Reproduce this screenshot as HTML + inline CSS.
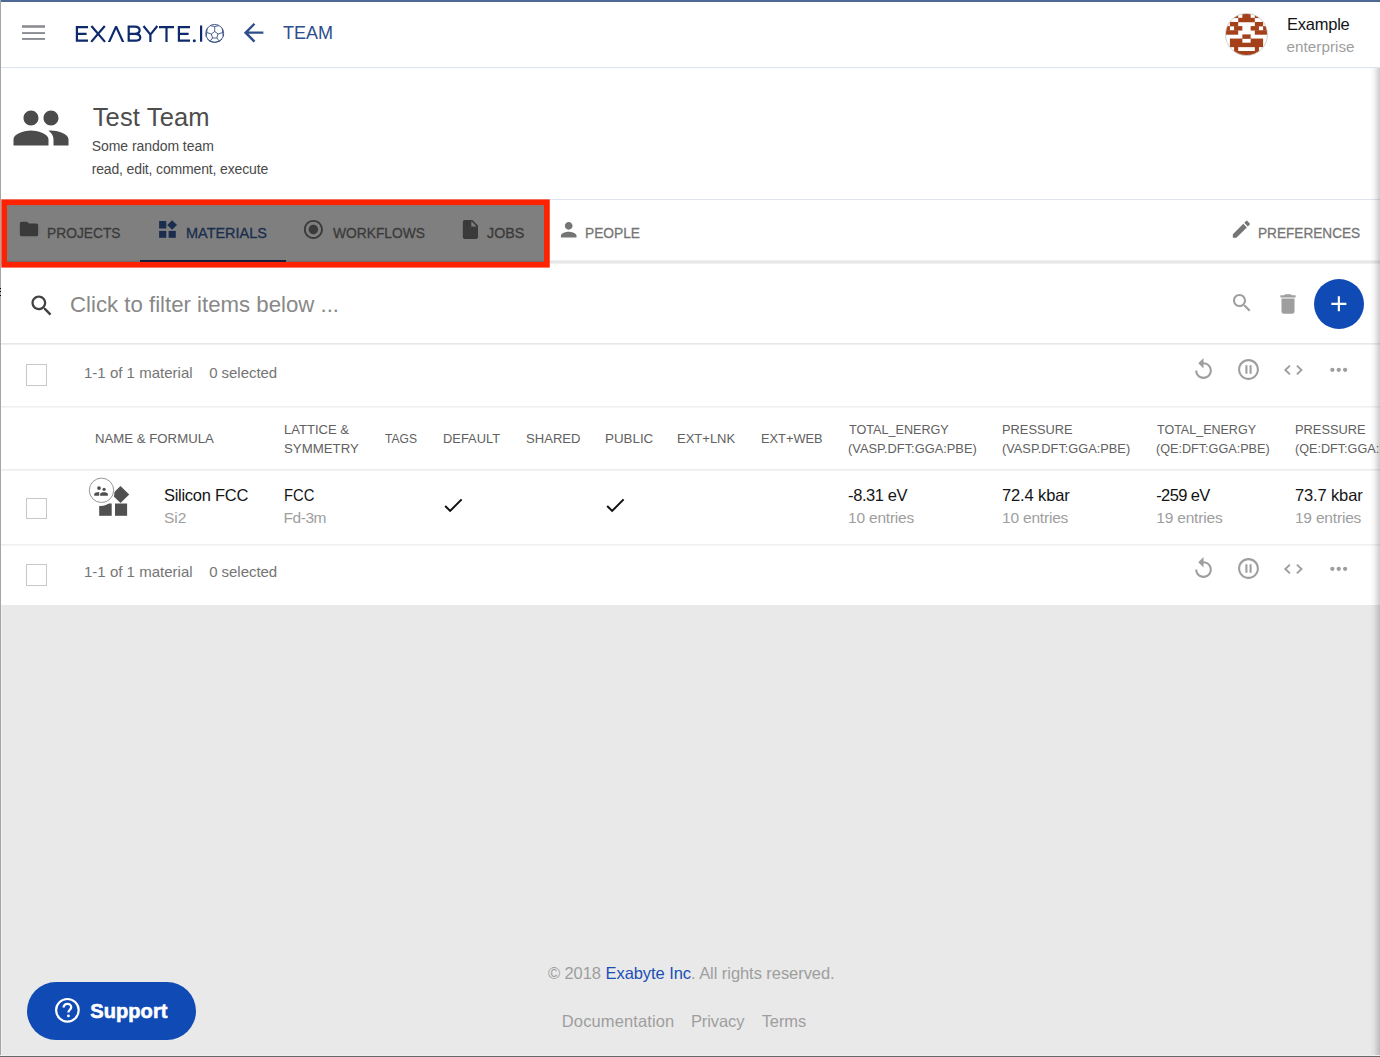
<!DOCTYPE html>
<html><head><meta charset="utf-8"><title>Team</title>
<style>
html,body{margin:0;padding:0}
body{width:1380px;height:1057px;overflow:hidden;position:relative;background:#e9e9e9;font-family:"Liberation Sans",sans-serif}
.abs{position:absolute;box-sizing:content-box}
.t{position:absolute;white-space:nowrap;line-height:1;font-family:"Liberation Sans",sans-serif;transform-origin:0 0}
.i{position:absolute;overflow:visible}
</style></head><body>
<div class="abs" style="left:0;top:0;width:1380px;height:605px;background:#fff"></div>
<div class="abs" style="left:0;top:0;width:1380px;height:2px;background:#4e6996"></div>
<div class="abs" style="left:0;top:67px;width:1380px;height:1px;background:#dde3ec"></div>
<div class="abs" style="left:0;top:199px;width:1380px;height:1px;background:#dfe3ec"></div>
<svg class="i" style="left:0;top:255px" width="1380" height="12" viewBox="0 255 1380 12"><rect x="0" y="260.3" width="1380" height="3.3" fill="#e8e8e8"/></svg>
<svg class="i" style="left:0;top:330px" width="1380" height="230" viewBox="0 330 1380 230"><rect x="0" y="343.1" width="1380" height="1.5" fill="#e6e6e6"/><rect x="0" y="406.1" width="1380" height="1.5" fill="#efefef"/><rect x="0" y="469.1" width="1380" height="1.5" fill="#ebebeb"/><rect x="0" y="544.1" width="1380" height="1.5" fill="#efefef"/></svg>
<svg class="i" style="left:0;top:0" width="60" height="60"><rect x="22" y="25.2" width="23" height="2.6" fill="#8a8d91"/><rect x="22" y="32.1" width="23" height="1.9" fill="#8a8d91"/><rect x="22" y="38" width="23" height="1.9" fill="#8a8d91"/></svg>
<svg class="i" style="left:0;top:0" width="240" height="60">
<g fill="none" stroke="#0e2a6c" stroke-width="2.2" stroke-linecap="butt" stroke-linejoin="miter">
<path d="M88 27.1H76.9V40.7H88M76.9 33.9H86.6"/>
<path d="M91.4 26L105 41.9M104.8 26L91.2 41.9"/>

<path d="M128.7 41.7V26.6H134.8C138.3 26.6 139.6 28.2 139.6 30.3C139.6 32.2 138.2 33.8 134.8 33.8H128.7M134.8 33.8C138.6 33.8 140.3 35.5 140.3 37.5C140.3 39.6 138.6 40.6 135.2 40.6H128.7"/>
<path d="M143.5 26L150.4 34.6L157.3 26M150.4 34.6V41.9"/>
<path d="M159 27.1H174M166.5 27.1V41.9"/>
<path d="M190 27.1H178.9V40.7H190M178.9 33.9H188.6"/>
<path d="M201.1 25.5V41.7"/>
</g>
<circle cx="194.3" cy="40.8" r="1.5" fill="#0e2a6c"/><path d="M107.9 41.9L115.2 26H117L124.3 41.9H121.9L116.1 29.2L110.3 41.9Z" fill="#0e2a6c"/>
<g fill="none" stroke="#2a4480" stroke-width="0.85">
<circle cx="214.7" cy="33.4" r="9.0"/>
<path d="M214.7 31.5L218.1 34L216.8 38L212.6 38L211.3 34Z"/>
<path d="M214.7 31.5V26.5M218.1 34L222.6 32.5M216.8 38L219.4 41.3M212.6 38L210 41.3M211.3 34L206.8 32.5"/>
<path d="M214.7 26.5L210.6 25.7M214.7 26.5L218.8 25.7M222.6 32.5L222.3 28.5M222.6 32.5L223.3 36.5M219.4 41.3L222 39M219.4 41.3L214.7 42.3L210 41.3L207.4 39M206.8 32.5L207.1 28.5M206.8 32.5L206.1 36.5"/>
</g>
</svg>
<svg class="i" style="left:238.9px;top:18.1px" width="29.25" height="29.25" viewBox="0 0 24 24"><path fill="#2c4f8c" d="M20 11H7.83l5.59-5.59L12 4l-8 8 8 8 1.41-1.41L7.83 13H20v-2z"/></svg>
<div class="t" style="left:282.5px;top:24.0px;font-size:18.6px;font-weight:400;color:#2c4f8c;transform:scaleX(0.97);">TEAM</div>
<svg class="i" style="left:1225px;top:12.8px" width="43" height="43" viewBox="0 0 43 43"><defs><clipPath id="av"><circle cx="21.5" cy="21.5" r="21"/></clipPath></defs><g clip-path="url(#av)"><rect width="43" height="43" fill="#fff"/><g fill="#a4411a" transform="translate(0.75,0.8)"><rect x="8.30" y="-0.15" width="4.15" height="4.45"/><rect x="16.60" y="-0.15" width="8.30" height="4.45"/><rect x="29.05" y="-0.15" width="4.15" height="4.45"/><rect x="12.45" y="4.00" width="16.60" height="4.45"/><rect x="4.15" y="8.15" width="8.30" height="4.45"/><rect x="29.05" y="8.15" width="8.30" height="4.45"/><rect x="0.00" y="12.30" width="4.15" height="4.45"/><rect x="8.30" y="12.30" width="8.30" height="4.45"/><rect x="24.90" y="12.30" width="8.30" height="4.45"/><rect x="37.35" y="12.30" width="4.15" height="4.45"/><rect x="0.00" y="16.45" width="12.45" height="4.45"/><rect x="29.05" y="16.45" width="12.45" height="4.45"/><rect x="16.60" y="20.60" width="8.30" height="4.45"/><rect x="4.15" y="24.75" width="12.45" height="4.45"/><rect x="24.90" y="24.75" width="12.45" height="4.45"/><rect x="4.15" y="28.90" width="33.20" height="4.45"/><rect x="8.30" y="33.05" width="4.15" height="4.45"/><rect x="29.05" y="33.05" width="4.15" height="4.45"/><rect x="8.30" y="37.20" width="24.90" height="4.45"/></g></g><circle cx="21.5" cy="21.5" r="21" fill="none" stroke="#c9c9c9" stroke-width="0.9"/></svg>
<div class="t" style="left:1287.1px;top:16.03px;font-size:16.5px;font-weight:400;color:#141414;letter-spacing:-0.25px;">Example</div>
<div class="t" style="left:1286.6px;top:38.83px;font-size:15.2px;font-weight:400;color:#9e9e9e;letter-spacing:0.044px;">enterprise</div>
<svg class="i" style="left:11px;top:98.2px" width="60" height="60" viewBox="0 0 24 24"><path fill="#4b4b4b" d="M16 11c1.66 0 2.99-1.34 2.99-3S17.66 5 16 5c-1.66 0-3 1.34-3 3s1.34 3 3 3zm-8 0c1.66 0 2.99-1.34 2.99-3S9.66 5 8 5C6.34 5 5 6.34 5 8s1.34 3 3 3zm0 2c-2.33 0-7 1.170-7 3.5V19h14v-2.5c0-2.33-4.67-3.5-7-3.5zm8 0c-.29 0-.62.02-.97.05 1.16.84 1.97 1.97 1.97 3.45V19h6v-2.5c0-2.33-4.67-3.5-7-3.5z"/></svg>
<div class="t" style="left:92.7px;top:104.81px;font-size:25.5px;font-weight:400;color:#4d4d4d;letter-spacing:0.138px;">Test Team</div>
<div class="t" style="left:91.7px;top:138.95px;font-size:14px;font-weight:400;color:#4a4a4a;letter-spacing:-0.053px;">Some random team</div>
<div class="t" style="left:91.7px;top:161.85px;font-size:14px;font-weight:400;color:#4a4a4a;letter-spacing:-0.148px;">read, edit, comment, execute</div>
<svg class="i" style="left:18.2px;top:218.2px" width="22" height="22" viewBox="0 0 24 24"><path fill="#757575" d="M10 4H4c-1.1 0-1.99.9-1.99 2L2 18c0 1.1.9 2 2 2h16c1.1 0 2-.9 2-2V8c0-1.1-.9-2-2-2h-8l-2-2z"/></svg>
<div class="t" style="left:47.3px;top:226.27px;font-size:14.8px;font-weight:400;color:#757575;transform:scaleX(0.9321);-webkit-text-stroke:0.3px #757575;">PROJECTS</div>
<svg class="i" style="left:0;top:0" width="200" height="260" fill="#365a9c"><rect x="159.1" y="221" width="7.2" height="7.5"/><rect x="159.1" y="230.9" width="7.2" height="6.9"/><rect x="168.6" y="230.9" width="7.2" height="6.9"/><path d="M172.1 220.2L177 225L172.1 229.8L167.2 225Z"/></svg>
<div class="t" style="left:185.8px;top:226.27px;font-size:14.8px;font-weight:400;color:#365a9c;transform:scaleX(0.978);-webkit-text-stroke:0.3px #365a9c;">MATERIALS</div>
<div class="abs" style="left:140px;top:260px;width:146px;height:2.4px;background:#1e4080"></div>
<svg class="i" style="left:302.4px;top:217.9px" width="22.8" height="22.8" viewBox="0 0 24 24"><path fill="#757575" d="M12 7c-2.76 0-5 2.24-5 5s2.24 5 5 5 5-2.24 5-5-2.24-5-5-5zm0-5C6.48 2 2 6.48 2 12s4.48 10 10 10 10-4.48 10-10S17.52 2 12 2zm0 18c-4.42 0-8-3.58-8-8s3.58-8 8-8 8 3.58 8 8-3.58 8-8 8z"/></svg>
<div class="t" style="left:332.9px;top:226.27px;font-size:14.8px;font-weight:400;color:#757575;transform:scaleX(0.9327);-webkit-text-stroke:0.3px #757575;">WORKFLOWS</div>
<svg class="i" style="left:458.9px;top:217.9px" width="22.8" height="22.8" viewBox="0 0 24 24"><path fill="#757575" d="M6 2c-1.1 0-1.99.9-1.99 2L4 20c0 1.1.89 2 1.99 2H18c1.1 0 2-.9 2-2V8l-6-6H6zm7 7V3.5L18.5 9H13z"/></svg>
<div class="t" style="left:486.8px;top:226.27px;font-size:14.8px;font-weight:400;color:#757575;transform:scaleX(0.9658);-webkit-text-stroke:0.3px #757575;">JOBS</div>
<svg class="i" style="left:557.4px;top:218.1px" width="23.4" height="23.4" viewBox="0 0 24 24"><path fill="#757575" d="M12 12c2.21 0 4-1.79 4-4s-1.79-4-4-4-4 1.79-4 4 1.79 4 4 4zm0 2c-2.67 0-8 1.34-8 4v2h16v-2c0-2.66-5.33-4-8-4z"/></svg>
<div class="t" style="left:585.1px;top:226.27px;font-size:14.8px;font-weight:400;color:#757575;transform:scaleX(0.9293);-webkit-text-stroke:0.3px #757575;">PEOPLE</div>
<svg class="i" style="left:1230px;top:218.2px" width="22.7" height="22.7" viewBox="0 0 24 24"><path fill="#757575" d="M3 17.25V21h3.75L17.81 9.94l-3.75-3.75L3 17.25zM20.71 7.04c.39-.39.39-1.02 0-1.41l-2.34-2.34c-.39-.39-1.02-.39-1.41 0l-1.83 1.83 3.75 3.75 1.83-1.83z"/></svg>
<div class="t" style="left:1258.4px;top:226.27px;font-size:14.8px;font-weight:400;color:#757575;transform:scaleX(0.92);-webkit-text-stroke:0.3px #757575;">PREFERENCES</div>
<svg class="i" style="left:0;top:190px" width="560" height="90" viewBox="0 190 560 90"><rect x="5" y="203" width="541" height="61" fill="rgba(0,0,0,0.5)"/><rect x="4.15" y="202.25" width="542.75" height="62.5" fill="none" stroke="#ff2200" stroke-width="5.7"/></svg>
<svg class="i" style="left:27.5px;top:291.9px" width="27.4" height="27.4" viewBox="0 0 24 24"><path fill="#424242" d="M15.5 14h-.79l-.28-.27C15.41 12.59 16 11.11 16 9.5 16 5.91 13.09 3 9.5 3S3 5.91 3 9.5 5.91 16 9.5 16c1.61 0 3.090-.59 4.23-1.57l.27.28v.79l5 4.99L20.49 19l-4.99-5zm-6 0C7.01 14 5 11.99 5 9.5S7.01 5 9.5 5 14 7.01 14 9.5 11.99 14 9.5 14z"/></svg>
<div class="t" style="left:70.0px;top:294.2px;font-size:22.2px;font-weight:400;color:#888888;transform:scaleX(1.0008);">Click to filter items below ...</div>
<svg class="i" style="left:1230.4px;top:290.9px" width="24" height="24" viewBox="0 0 24 24"><path fill="#9e9e9e" d="M15.5 14h-.79l-.28-.27C15.41 12.59 16 11.11 16 9.5 16 5.91 13.09 3 9.5 3S3 5.91 3 9.5 5.91 16 9.5 16c1.61 0 3.090-.59 4.23-1.57l.27.28v.79l5 4.99L20.49 19l-4.99-5zm-6 0C7.01 14 5 11.99 5 9.5S7.01 5 9.5 5 14 7.01 14 9.5 11.99 14 9.5 14z"/></svg>
<svg class="i" style="left:1274.5px;top:290.7px" width="26" height="26" viewBox="0 0 24 24"><path fill="#9e9e9e" d="M6 19c0 1.1.9 2 2 2h8c1.1 0 2-.9 2-2V7H6v12zM19 4h-3.5l-1-1h-5l-1 1H5v2h14V4z"/></svg>
<div class="abs" style="left:1314px;top:279px;width:50px;height:50px;border-radius:50%;background:#104ab4"></div>
<svg class="i" style="left:1326.2px;top:290.8px" width="25.7" height="25.7" viewBox="0 0 24 24"><path fill="#ffffff" d="M19 13h-6v6h-2v-6H5v-2h6V5h2v6h6v2z"/></svg>
<div class="abs" style="left:26.3px;top:364.3px;width:18.5px;height:19.5px;border:1px solid #c8c8c8"></div>
<div class="t" style="left:84.0px;top:365.4px;font-size:15px;font-weight:400;color:#757575;letter-spacing:0.012px;">1-1 of 1 material</div>
<div class="t" style="left:209.2px;top:365.4px;font-size:15px;font-weight:400;color:#757575;letter-spacing:-0.044px;">0 selected</div>
<svg class="i" style="left:1191.2px;top:357.2px" width="25" height="25" viewBox="0 0 24 24"><path fill="#9e9e9e" d="M12 5V1L7 6l5 5V7c3.31 0 6 2.69 6 6s-2.69 6-6 6-6-2.69-6-6H4c0 4.42 3.58 8 8 8s8-3.58 8-8-3.58-8-8-8z"/></svg>
<svg class="i" style="left:1236px;top:357.2px" width="25" height="25" viewBox="0 0 24 24"><path fill="#9e9e9e" d="M9 16h2V8H9v8zm3-14C6.48 2 2 6.48 2 12s4.48 10 10 10 10-4.48 10-10S17.52 2 12 2zm0 18c-4.41 0-8-3.59-8-8s3.59-8 8-8 8 3.59 8 8-3.59 8-8 8zm1-4h2V8h-2v8z"/></svg>
<svg class="i" style="left:1280px;top:359.5px" width="28" height="20"><path d="M1289.9 5.6L1285.3 10L1289.9 14.4M1296.9 5.6L1301.5 10L1296.9 14.4" transform="translate(-1280,0)" fill="none" stroke="#9e9e9e" stroke-width="1.9"/></svg>
<svg class="i" style="left:1325.5px;top:356.7px" width="25.5" height="25.5" viewBox="0 0 24 24"><path fill="#9e9e9e" d="M6 10c-1.1 0-2 .9-2 2s.9 2 2 2 2-.9 2-2-.9-2-2-2zm12 0c-1.1 0-2 .9-2 2s.9 2 2 2 2-.9 2-2-.9-2-2-2zm-6 0c-1.1 0-2 .9-2 2s.9 2 2 2 2-.9 2-2-.9-2-2-2z"/></svg>
<div class="t" style="left:95.3px;top:432.49px;font-size:13.6px;font-weight:400;color:#616161;transform:scaleX(0.9711);">NAME &amp; FORMULA</div>
<div class="t" style="left:283.5px;top:422.59px;font-size:13.6px;font-weight:400;color:#616161;transform:scaleX(0.9597);">LATTICE &amp;</div>
<div class="t" style="left:283.5px;top:441.59px;font-size:13.6px;font-weight:400;color:#616161;transform:scaleX(0.9747);">SYMMETRY</div>
<div class="t" style="left:384.7px;top:432.49px;font-size:13.6px;font-weight:400;color:#616161;transform:scaleX(0.8889);">TAGS</div>
<div class="t" style="left:443.1px;top:432.49px;font-size:13.6px;font-weight:400;color:#616161;transform:scaleX(0.9475);">DEFAULT</div>
<div class="t" style="left:525.9px;top:432.49px;font-size:13.6px;font-weight:400;color:#616161;transform:scaleX(0.9618);">SHARED</div>
<div class="t" style="left:605.0px;top:432.49px;font-size:13.6px;font-weight:400;color:#616161;transform:scaleX(0.983);">PUBLIC</div>
<div class="t" style="left:677.2px;top:432.49px;font-size:13.6px;font-weight:400;color:#616161;transform:scaleX(0.9567);">EXT+LNK</div>
<div class="t" style="left:761.2px;top:432.49px;font-size:13.6px;font-weight:400;color:#616161;transform:scaleX(0.9437);">EXT+WEB</div>
<div class="t" style="left:849.1px;top:423.49px;font-size:13.6px;font-weight:400;color:#616161;transform:scaleX(0.928);">TOTAL_ENERGY</div>
<div class="t" style="left:848.1px;top:442.29px;font-size:13.6px;font-weight:400;color:#616161;transform:scaleX(0.9452);">(VASP.DFT:GGA:PBE)</div>
<div class="t" style="left:1002.0px;top:423.49px;font-size:13.6px;font-weight:400;color:#616161;transform:scaleX(0.9438);">PRESSURE</div>
<div class="t" style="left:1002.0px;top:442.29px;font-size:13.6px;font-weight:400;color:#616161;transform:scaleX(0.9407);">(VASP.DFT:GGA:PBE)</div>
<div class="t" style="left:1157.2px;top:423.49px;font-size:13.6px;font-weight:400;color:#616161;transform:scaleX(0.9206);">TOTAL_ENERGY</div>
<div class="t" style="left:1156.2px;top:442.29px;font-size:13.6px;font-weight:400;color:#616161;transform:scaleX(0.9289);">(QE:DFT:GGA:PBE)</div>
<div class="t" style="left:1294.9px;top:423.49px;font-size:13.6px;font-weight:400;color:#616161;transform:scaleX(0.9452);">PRESSURE</div>
<div class="t" style="left:1294.9px;top:442.29px;font-size:13.6px;font-weight:400;color:#616161;transform:scaleX(0.9289);">(QE:DFT:GGA:PBE)</div>
<div class="abs" style="left:26.3px;top:497.7px;width:18.5px;height:19.5px;border:1px solid #c8c8c8"></div>
<svg class="i" style="left:80px;top:470px" width="60" height="60" viewBox="80 470 60 60">
<g fill="#505050">
<rect x="99.2" y="503.5" width="12.5" height="12.3"/>
<rect x="115" y="503.5" width="12.1" height="12.3"/>
<path d="M120.5 486L129.2 494.5L120.5 503L111.8 494.5Z"/>
</g>
<circle cx="100.5" cy="492" r="14" fill="#fff"/>
<circle cx="101.5" cy="490.3" r="12.2" fill="#fff" stroke="#8a8a8a" stroke-width="0.9"/>
<g fill="#505050">
<circle cx="99" cy="488.1" r="1.9"/><circle cx="104.1" cy="489.3" r="1.6"/>
<path d="M94.2 495.7V494.2C94.2 492.8 96.6 491.9 99.2 491.9L99.2 495.7Z"/>
<path d="M100.1 495.7V494.3C100.1 492.9 102.2 492.3 104 492.3C105.8 492.3 107.9 492.9 107.9 494.3V495.7Z"/>
</g></svg>
<div class="t" style="left:163.9px;top:487.03px;font-size:16.5px;font-weight:400;color:#141414;letter-spacing:-0.26px;">Silicon FCC</div>
<div class="t" style="left:163.9px;top:509.58px;font-size:15.5px;font-weight:400;color:#9e9e9e;">Si2</div>
<div class="t" style="left:283.6px;top:487.03px;font-size:16.5px;font-weight:400;color:#141414;transform:scaleX(0.8969);">FCC</div>
<div class="t" style="left:283.6px;top:509.58px;font-size:15.5px;font-weight:400;color:#9e9e9e;letter-spacing:-0.475px;">Fd-3m</div>
<div class="t" style="left:848.1px;top:487.13px;font-size:16.5px;font-weight:400;color:#141414;letter-spacing:-0.414px;">-8.31 eV</div>
<div class="t" style="left:848.1px;top:509.68px;font-size:15.5px;font-weight:400;color:#9e9e9e;letter-spacing:-0.211px;">10 entries</div>
<div class="t" style="left:1002.0px;top:487.13px;font-size:16.5px;font-weight:400;color:#141414;letter-spacing:-0.137px;">72.4 kbar</div>
<div class="t" style="left:1002.0px;top:509.68px;font-size:15.5px;font-weight:400;color:#9e9e9e;letter-spacing:-0.189px;">10 entries</div>
<div class="t" style="left:1156.2px;top:487.13px;font-size:16.5px;font-weight:400;color:#141414;letter-spacing:-0.6px;">-259 eV</div>
<div class="t" style="left:1156.2px;top:509.68px;font-size:15.5px;font-weight:400;color:#9e9e9e;letter-spacing:-0.178px;">19 entries</div>
<div class="t" style="left:1294.9px;top:487.13px;font-size:16.5px;font-weight:400;color:#141414;letter-spacing:-0.125px;">73.7 kbar</div>
<div class="t" style="left:1294.9px;top:509.68px;font-size:15.5px;font-weight:400;color:#9e9e9e;letter-spacing:-0.178px;">19 entries</div>
<svg class="i" style="left:440.6px;top:492.9px" width="24.4" height="24.4" viewBox="0 0 24 24"><path fill="#111111" d="M9 16.17L4.83 12l-1.42 1.41L9 19 21 7l-1.41-1.41z"/></svg>
<svg class="i" style="left:602.5px;top:492.9px" width="24.4" height="24.4" viewBox="0 0 24 24"><path fill="#111111" d="M9 16.17L4.83 12l-1.42 1.41L9 19 21 7l-1.41-1.41z"/></svg>
<div class="abs" style="left:26.3px;top:564.3px;width:18.5px;height:19.5px;border:1px solid #c8c8c8"></div>
<div class="t" style="left:84.0px;top:564.0px;font-size:15px;font-weight:400;color:#757575;letter-spacing:0.012px;">1-1 of 1 material</div>
<div class="t" style="left:209.2px;top:564.0px;font-size:15px;font-weight:400;color:#757575;letter-spacing:-0.044px;">0 selected</div>
<svg class="i" style="left:1191.2px;top:556.2px" width="25" height="25" viewBox="0 0 24 24"><path fill="#9e9e9e" d="M12 5V1L7 6l5 5V7c3.31 0 6 2.69 6 6s-2.69 6-6 6-6-2.69-6-6H4c0 4.42 3.58 8 8 8s8-3.58 8-8-3.58-8-8-8z"/></svg>
<svg class="i" style="left:1236px;top:556.2px" width="25" height="25" viewBox="0 0 24 24"><path fill="#9e9e9e" d="M9 16h2V8H9v8zm3-14C6.48 2 2 6.48 2 12s4.48 10 10 10 10-4.48 10-10S17.52 2 12 2zm0 18c-4.41 0-8-3.59-8-8s3.59-8 8-8 8 3.59 8 8-3.59 8-8 8zm1-4h2V8h-2v8z"/></svg>
<svg class="i" style="left:1280px;top:558.5px" width="28" height="20"><path d="M1289.9 5.6L1285.3 10L1289.9 14.4M1296.9 5.6L1301.5 10L1296.9 14.4" transform="translate(-1280,0)" fill="none" stroke="#9e9e9e" stroke-width="1.9"/></svg>
<svg class="i" style="left:1325.5px;top:555.7px" width="25.5" height="25.5" viewBox="0 0 24 24"><path fill="#9e9e9e" d="M6 10c-1.1 0-2 .9-2 2s.9 2 2 2 2-.9 2-2-.9-2-2-2zm12 0c-1.1 0-2 .9-2 2s.9 2 2 2 2-.9 2-2-.9-2-2-2zm-6 0c-1.1 0-2 .9-2 2s.9 2 2 2 2-.9 2-2-.9-2-2-2z"/></svg>
<div class="t" style="left:547.9px;top:964.93px;font-size:16.5px;font-weight:400;color:#9e9e9e;letter-spacing:-0.062px;">© 2018 <span style="color:#1a4fb8">Exabyte Inc</span>. All rights reserved.</div>
<div class="t" style="left:561.8px;top:1012.73px;font-size:16.5px;font-weight:400;color:#9e9e9e;letter-spacing:0.125px;">Documentation</div>
<div class="t" style="left:690.9px;top:1012.73px;font-size:16.5px;font-weight:400;color:#9e9e9e;letter-spacing:-0.1px;">Privacy</div>
<div class="t" style="left:761.7px;top:1012.73px;font-size:16.5px;font-weight:400;color:#9e9e9e;letter-spacing:-0.1px;">Terms</div>
<div class="abs" style="left:26.7px;top:981.7px;width:169px;height:58.3px;border-radius:29.2px;background:#104ab4"></div>
<svg class="i" style="left:50px;top:990px" width="40" height="40"><circle cx="17.4" cy="20.3" r="11.3" fill="none" stroke="#fff" stroke-width="2.2"/><path d="M13.6 17.6C13.6 15.4 15.3 13.9 17.4 13.9C19.5 13.9 21.2 15.3 21.2 17.3C21.2 19.8 18.4 19.8 18.4 22.6" fill="none" stroke="#fff" stroke-width="2.3"/><circle cx="18.4" cy="25.9" r="1.4" fill="#fff"/></svg>
<div class="t" style="left:90.2px;top:1001.37px;font-size:20px;font-weight:700;color:#ffffff;letter-spacing:0.1px;-webkit-text-stroke:0.6px #ffffff;">Support</div>
<div class="abs" style="left:0;top:0;width:1px;height:1057px;background:#a5a5a5"></div>
<div class="abs" style="left:1370px;top:68px;width:10px;height:989px;background:linear-gradient(to right,rgba(0,0,0,0),rgba(0,0,0,0.04) 40%,rgba(0,0,0,0.2))"></div>
<div class="abs" style="left:0;top:1055px;width:1380px;height:1px;background:#efefef"></div>
<div class="abs" style="left:0;top:1056px;width:1380px;height:1px;background:#686868"></div>
<div class="abs" style="left:1px;top:605px;width:1px;height:450px;background:#f0f0f0"></div>
<div class="abs" style="left:0;top:288px;width:1px;height:1px;background:#000"></div><div class="abs" style="left:0;top:291px;width:1px;height:1px;background:#000"></div><div class="abs" style="left:0;top:295px;width:1px;height:1px;background:#000"></div>
</body></html>
